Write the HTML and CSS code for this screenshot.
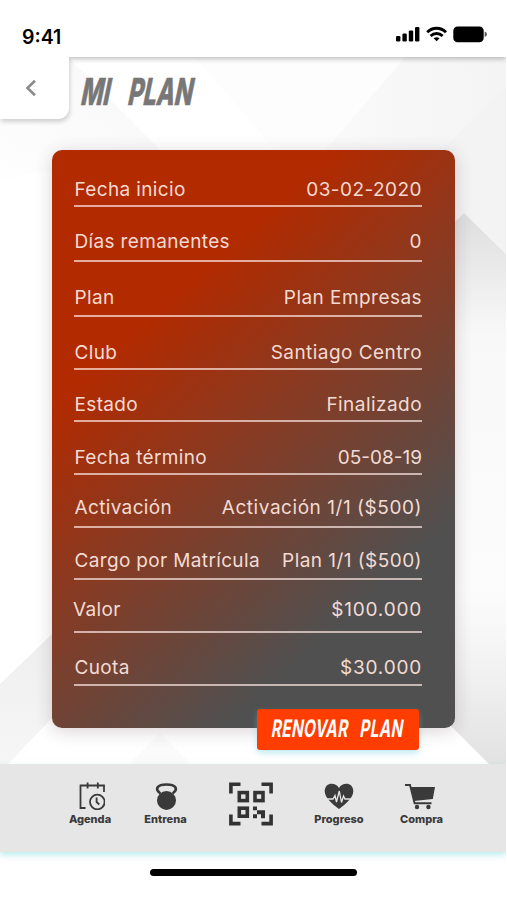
FILE: index.html
```
<!DOCTYPE html>
<html lang="es">
<head>
  <meta charset="UTF-8" />
  <meta name="viewport" content="width=device-width, initial-scale=1.0" />
  <title>Mi Plan</title>
  <link rel="stylesheet" href="styles.css">
</head>
<body>
  <div class="app">
    <!-- Fondo con figuras -->
    <svg class="fondo" viewBox="0 0 506 900" preserveAspectRatio="none" aria-hidden="true">
      <defs>
        <linearGradient id="gDer" x1="0" y1="0" x2="0" y2="1">
          <stop offset="0" stop-color="#dedede" />
          <stop offset=".32" stop-color="#f8f8f8" />
          <stop offset="1" stop-color="#fcfcfc" />
        </linearGradient>
        <linearGradient id="gAbajo" x1="0" y1="0" x2="0" y2="1">
          <stop offset="0" stop-color="#fcfcfc" />
          <stop offset=".3" stop-color="#f6f6f6" />
          <stop offset="1" stop-color="#e2e2e2" />
        </linearGradient>
        <linearGradient id="gIzq" x1="0" y1="0" x2="0" y2="1">
          <stop offset="0" stop-color="#efefef" />
          <stop offset="1" stop-color="#f6f6f6" />
        </linearGradient>
        <linearGradient id="gTop" x1="0" y1="0" x2="1" y2="0">
          <stop offset="0" stop-color="#fafafa" />
          <stop offset="1" stop-color="#f4f4f5" />
        </linearGradient>
        <linearGradient id="gEsq" x1="1" y1="0" x2="0" y2="1">
          <stop offset="0" stop-color="#f7f7f8" />
          <stop offset="1" stop-color="#fefefe" />
        </linearGradient>
      </defs>
      <polygon points="68,57 160,150 52,170 0,180 0,57" fill="url(#gEsq)" />
      <polygon points="195,57 405,57 325,150 275,150" fill="#fdfdfd" />
      <polygon points="405,57 325,150 450,150 506,90 506,57" fill="url(#gTop)" />
      <polygon points="506,88 440,152 440,236 464,213 506,254" fill="#f3f3f4" />
      <polygon points="464,213 506,254 506,590 440,590 440,236" fill="url(#gDer)" />
      <polygon points="506,590 506,764 489,764 440,715 440,590" fill="url(#gAbajo)" />
      <polygon points="0,684 52,634 52,718 8,764 0,764" fill="url(#gIzq)" />
      <polygon points="160,733 190,764 130,764" fill="#fbfbfb" />
    </svg>

    <header class="status">
      <span class="hora">9:41</span>
      <svg class="status-icons" width="92" height="18" viewBox="0 0 92 18">
        <rect x="0" y="10" width="4.4" height="5.4" rx="1.2" />
        <rect x="6.4" y="7.6" width="4.4" height="7.8" rx="1.2" />
        <rect x="12.8" y="4.4" width="4.4" height="11" rx="1.2" />
        <rect x="19" y="1" width="4.4" height="14.4" rx="1.2" />
        <g fill="none" stroke="#000" stroke-width="2.9">
          <path d="M31.2 6.3C36.6.9 44.6.9 50 6.3" />
          <path d="M34.6 10C38 6.7 43.2 6.7 46.6 10" />
        </g>
        <path d="M40.6 15.3L37.6 12.3Q40.6 10 43.6 12.3Z" />
        <rect x="57.3" y=".4" width="30.4" height="15.8" rx="4.3" />
        <path d="M88.7 5.6Q90.9 6.3 90.9 8.3T88.7 11Z" fill="#555" />
      </svg>
    </header>

    <div class="titulo">
      <a class="volver" href="#" aria-label="Volver">
        <svg width="12" height="18" viewBox="0 0 12 18"><path d="M10 1.8L2.5 9L10 16.2" /></svg>
      </a>
      <h1>MI PLAN</h1>
    </div>

    <main class="tarjeta">
      <dl class="datos">
        <div class="fila"><dt>Fecha inicio</dt><dd>03-02-2020</dd></div>
        <div class="fila"><dt>Días remanentes</dt><dd>0</dd></div>
        <div class="fila"><dt>Plan</dt><dd>Plan Empresas</dd></div>
        <div class="fila"><dt>Club</dt><dd>Santiago Centro</dd></div>
        <div class="fila"><dt>Estado</dt><dd>Finalizado</dd></div>
        <div class="fila"><dt>Fecha término</dt><dd class="corto">05-08-19</dd></div>
        <div class="fila"><dt>Activación</dt><dd>Activación 1/1 ($500)</dd></div>
        <div class="fila"><dt>Cargo por Matrícula</dt><dd>Plan 1/1 ($500)</dd></div>
        <div class="fila"><dt>Valor</dt><dd class="monto">$100.000</dd></div>
        <div class="fila"><dt>Cuota</dt><dd class="monto">$30.000</dd></div>
      </dl>
      <button class="renovar"><span>RENOVAR PLAN</span></button>
    </main>

    <nav class="menu">
      <a class="item" href="#">
        <svg width="28" height="30" viewBox="0 0 28 30">
          <g fill="none" stroke="#3a3a3a" stroke-width="1.8">
            <path d="M8.5 28H3.5V5.5H27V12" />
            <path d="M10.6 2.5V8.5M20.8 2.5V8.5" />
            <circle cx="20.3" cy="22" r="7.3" />
            <path d="M19.6 17.5V22L22.3 24.5" />
          </g>
        </svg>
        Agenda
      </a>
      <a class="item" href="#">
        <svg width="28" height="30" viewBox="0 0 28 30">
          <path d="M8.3 13.5C2.5 9 5 4.5 14.5 4.5S26.5 9 20.7 13.5" fill="none" stroke="#3a3a3a" stroke-width="2.7" />
          <circle cx="14.5" cy="20.4" r="9.5" />
        </svg>
        Entrena
      </a>
      <a class="item" href="#" aria-label="Código QR">
        <svg width="44" height="44" viewBox="0 0 44 44">
          <g fill="none" stroke="#333" stroke-width="3.6">
            <path d="M1.9 11.5V2.2H11.5M32.5 2.2H42.1V11.5M1.9 32.5V41.6H11.5M32.5 41.6H42.1V32.5" />
            <rect x="10.3" y="10.6" width="8" height="8" />
            <rect x="26" y="10.6" width="8" height="8" />
            <rect x="10.3" y="26.2" width="8" height="8" />
          </g>
          <path fill="#333" d="M24 24.4H28V28.3H24ZM28 28.3H36V36.2H32V32.2H28ZM24 32.2H28V36.2H24Z" />
        </svg>
      </a>
      <a class="item" href="#">
        <svg width="30" height="30" viewBox="0 0 30 30">
          <path d="M15 29C8 24 .7 17.5 .7 11.3C.7 2.5 11 1.5 15 8C19 1.5 29.3 2.5 29.3 11.3C29.3 17.5 22 24 15 29Z" />
          <path d="M3 19H9L11 15.5L12.5 22L15.3 11L17.5 22.5L19.5 16L21 19H27" fill="none" stroke="#e6e6e6" stroke-width="1.3" />
        </svg>
        Progreso
      </a>
      <a class="item compra" href="#">
        <svg width="32" height="30" viewBox="0 0 32 30">
          <path d="M6.5 7H31L28.8 18.9L10 21Z" />
          <path d="M1 5H6L10.6 23.3H27.5" fill="none" stroke="#3a3a3a" stroke-width="1.9" />
          <circle cx="13" cy="27" r="2.2" /><circle cx="24.4" cy="27" r="2.2" />
        </svg>
        Compra
      </a>
    </nav>
    <div class="home"></div>
  </div>
</body>
</html>
```
FILE: styles.css
```
* { box-sizing: border-box; }
body { margin: 0; background: #fff; font-family: Inter, sans-serif; }
.app {
  position: relative;
  isolation: isolate;
  display: flex;
  flex-direction: column;
  width: 506px;
  height: 900px;
  overflow: hidden;
}
.fondo {
  position: absolute;
  inset: 0;
  z-index: -1;
  width: 100%;
  height: 100%;
}

/* Barra de estado */
.status {
  display: flex;
  justify-content: space-between;
  height: 57px;
  padding: 26px 18px 0 22px;
  background: #fff;
  box-shadow: 0 2px 5px rgba(0, 0, 0, .25);
}
.hora { font-size: 19.5px; line-height: 23px; font-weight: 600; }

/* Encabezado */
.titulo { display: flex; height: 92.5px; }
.volver {
  display: flex;
  align-items: center;
  z-index: 1;
  width: 69px;
  height: 62px;
  padding-left: 25px;
  background: #fff;
  border-radius: 0 0 11px 0;
  box-shadow: 1px 3px 4px rgba(0, 0, 0, .17);
  clip-path: inset(0 -10px -10px 0);
}
.volver path { fill: none; stroke: #8b8b8b; stroke-width: 2.6; }
h1 {
  margin: 13px 0 0 5px;
  font-size: 37px;
  line-height: 44px;
  font-weight: 800;
  color: #777;
  word-spacing: 21px;
  white-space: nowrap;
  -webkit-text-stroke: .6px #777;
  transform: scaleX(.63) skewX(-18deg);
  transform-origin: 0 80%;
}

/* Tarjeta del plan */
.tarjeta {
  display: flex;
  flex-direction: column;
  width: 403px;
  height: 578.5px;
  margin-left: 52px;
  padding: 0 33px 0 22px;
  border-radius: 10px;
  background: linear-gradient(138deg, #b22a00 27%, #505050 78%);
  box-shadow: 0 3px 18px rgba(70, 30, 50, .2);
}
.datos { margin: 0; }
.fila {
  display: flex;
  justify-content: space-between;
  align-items: flex-end;
  height: 53px;
  padding: 0 0 4px 1px;
  border-bottom: 2px solid rgba(255, 235, 230, .68);
  font-size: 19px;
  line-height: 22px;
  letter-spacing: .35px;
  color: #f3dbd3;
  white-space: nowrap;
}
.fila dt { margin-left: -.5px; }
.fila dd { margin: 0; letter-spacing: .45px; }
.fila .monto { letter-spacing: .8px; }
.fila .corto { letter-spacing: 0; }
.fila:nth-child(1) { height: 57px; }
.fila:nth-child(2) { height: 55px; padding-bottom: 7px; }
.fila:nth-child(3) { height: 55px; padding-bottom: 6px; }
.fila:nth-child(5) { height: 52px; }
.fila:nth-child(7) { padding-bottom: 7px; }
.fila:nth-child(7) dd { letter-spacing: .55px; }
.fila:nth-child(8) { height: 52px; padding-bottom: 6px; }
.fila:nth-child(9) { padding-bottom: 10px; }
.fila:nth-child(9) dt { margin-left: -2px; }
.fila:nth-child(10) { padding-bottom: 5px; }
.renovar {
  flex: none;
  align-self: flex-end;
  width: 162px;
  height: 41px;
  margin: 23px 3px 0 0;
  padding: 0;
  border: 0;
  border-radius: 3px;
  background: #ff3d00;
  box-shadow: 0 3px 6px rgba(90, 200, 220, .4);
  color: #fff;
}
.renovar span {
  display: block;
  margin: 0 -30px;
  font: 700 24px/40px Inter, sans-serif;
  letter-spacing: .6px;
  word-spacing: 12px;
  white-space: nowrap;
  transform: scaleX(.64) skewX(-14deg);
}

/* Menú inferior */
.menu {
  display: flex;
  height: 88px;
  margin-top: 36px;
  padding: 16px 0 0 48px;
  background: #e6e6e6;
  box-shadow: 0 3px 6px rgba(120, 220, 220, .5);
}
.item {
  display: flex;
  flex-direction: column;
  align-items: center;
  width: 84px;
  color: #3a3a3a;
  fill: #3a3a3a;
  font-size: 11px;
  line-height: 14px;
  font-weight: 800;
  text-decoration: none;
}
.item svg { margin-bottom: 1.5px; }
.item:nth-child(1) svg { margin-left: 1px; }
.item:nth-child(2) { width: 67px; }
.item:nth-child(3) { width: 104px; padding-top: 2px; }
.item:nth-child(4) { width: 72px; }
.item:nth-child(5) { width: 93px; }
.compra svg { margin-left: -4px; }
.home {
  width: 207px;
  height: 7px;
  margin: 17px 0 0 150px;
  border-radius: 4px;
  background: #000;
}
```
